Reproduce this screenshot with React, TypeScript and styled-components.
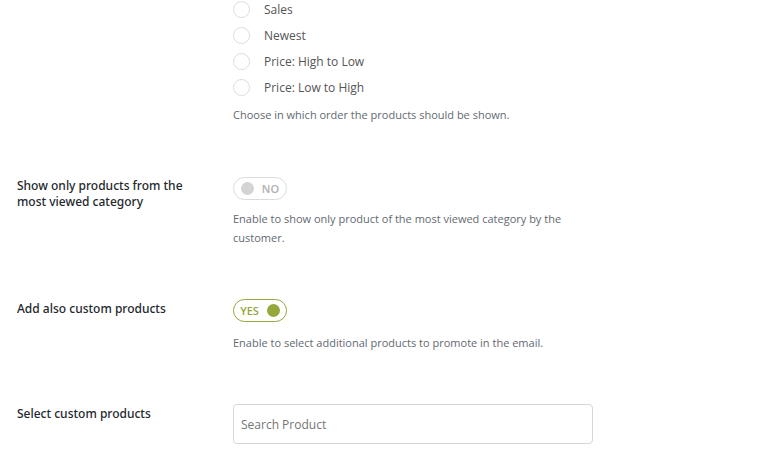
import React from 'react'
import styled, { createGlobalStyle } from 'styled-components'

const GlobalStyle = createGlobalStyle`
  html, body {
    margin: 0;
    padding: 0;
    background: #ffffff;
  }
  body {
    font-family: 'Open Sans', 'Noto Sans', 'Liberation Sans', sans-serif;
    -webkit-font-smoothing: antialiased;
  }
`

const GREEN = '#94a83c'

const Page = styled.div`
  width: 762px;
  height: 452px;
  overflow: hidden;
  background: #fff;
`

const Form = styled.div`
  margin-top: -4px;
  padding-left: 17px;
  display: flex;
  flex-direction: column;
`

const Row = styled.div<{ gap?: number }>`
  display: grid;
  grid-template-columns: 216px 360px;
  margin-bottom: ${(p) => p.gap ?? 0}px;
`

const Label = styled.div<{ top?: number }>`
  padding-top: ${(p) => p.top ?? 1}px;
  padding-right: 30px;
  font-family: 'Noto Sans', 'Open Sans', sans-serif;
  font-size: 12px;
  line-height: 16px;
  font-weight: 500;
  color: #23282d;
`

const Field = styled.div`
  display: flex;
  flex-direction: column;
  align-items: flex-start;
`

const RadioList = styled.div`
  display: flex;
  flex-direction: column;
`

const RadioItem = styled.label`
  display: flex;
  align-items: center;
  height: 26px;
  font-size: 12px;
  color: #555;
`

const RadioCircle = styled.span`
  width: 17px;
  height: 17px;
  border: 1px solid #dcdcdc;
  border-radius: 50%;
  box-sizing: border-box;
  margin-right: 14px;
  background: #fff;
`

const Description = styled.p<{ top: number }>`
  margin: ${(p) => p.top}px 0 0;
  font-size: 11px;
  line-height: 19px;
  color: #646970;
`

const Toggle = styled.div<{ on: boolean }>`
  display: flex;
  align-items: center;
  flex-direction: ${(p) => (p.on ? 'row' : 'row-reverse')};
  justify-content: center;
  gap: 8px;
  width: 54px;
  height: 23px;
  box-sizing: border-box;
  border-radius: 12px;
  border: 1px solid ${(p) => (p.on ? GREEN : '#dcdcdc')};
  font-size: 11px;
  font-weight: 600;
  color: ${(p) => (p.on ? GREEN : '#b0b0b0')};
  background: #fff;
`

const Knob = styled.span<{ on: boolean }>`
  width: 13px;
  height: 13px;
  border-radius: 50%;
  background: ${(p) => (p.on ? GREEN : '#d4d4d4')};
`

const SearchInput = styled.input`
  width: 360px;
  height: 40px;
  margin-top: 1px;
  box-sizing: border-box;
  padding: 0 7px;
  border: 1px solid #d6d6d6;
  border-radius: 4px;
  font-family: inherit;
  font-size: 12px;
  color: #555;
  outline: none;

  ::placeholder {
    color: #666;
  }
`

const radioOptions = ['Sales', 'Newest', 'Price: High to Low', 'Price: Low to High']

export default function App() {
  return (
    <Page>
      <GlobalStyle />
      <Form>
        <Row gap={53}>
          <Label />
          <Field>
            <RadioList>
              {radioOptions.map((opt) => (
                <RadioItem key={opt}>
                  <RadioCircle />
                  {opt}
                </RadioItem>
              ))}
            </RadioList>
            <Description top={5}>Choose in which order the products should be shown.</Description>
          </Field>
        </Row>

        <Row gap={52}>
          <Label>Show only products from the most viewed category</Label>
          <Field>
            <Toggle on={false}>
              NO
              <Knob on={false} />
            </Toggle>
            <Description top={9}>
              Enable to show only product of the most viewed category by the customer.
            </Description>
          </Field>
        </Row>

        <Row gap={51}>
          <Label top={2}>Add also custom products</Label>
          <Field>
            <Toggle on>
              YES
              <Knob on />
            </Toggle>
            <Description top={11}>
              Enable to select additional products to promote in the email.
            </Description>
          </Field>
        </Row>

        <Row>
          <Label top={3}>Select custom products</Label>
          <Field>
            <SearchInput placeholder="Search Product" />
          </Field>
        </Row>
      </Form>
    </Page>
  )
}
